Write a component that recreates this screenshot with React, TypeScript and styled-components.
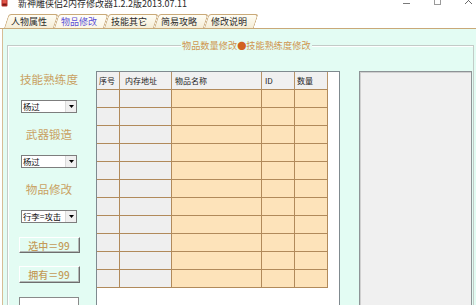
import React from "react";
import styled, { createGlobalStyle } from "styled-components";

const GlobalStyle = createGlobalStyle`
  html, body { margin: 0; padding: 0; background: #ffffff; }
  body {
    width: 476px; height: 305px; overflow: hidden;
    font-family: "Noto Sans CJK SC", "Noto Sans", sans-serif;
  }
  * { box-sizing: border-box; }
`;

const Window = styled.div`
  width: 476px;
  height: 305px;
  display: flex;
  flex-direction: column;
  overflow: hidden;
  background: #ffffff;
`;

const TitleBar = styled.div`
  height: 9px;
  flex: none;
  display: flex;
  align-items: flex-start;
  overflow: hidden;
  padding-left: 1px;
  background: #ffffff;
`;

const AppIcon = styled.svg`
  flex: none;
  margin-top: -1px;
`;

const TitleText = styled.span`
  margin-left: 10px;
  margin-top: -1px;
  font-size: 9px;
  line-height: 9px;
  color: #2a2a2a;
  white-space: nowrap;
`;

const Controls = styled.div`
  margin-left: auto;
  display: flex;
  gap: 24px;
  padding-right: 4px;
`;

const ControlGlyph = styled.svg<{ $top: number }>`
  flex: none;
  margin-top: ${(p) => p.$top}px;
`;

const TabStrip = styled.div`
  height: 20px;
  flex: none;
  display: flex;
  align-items: flex-end;
  padding-left: 4px;
  border-bottom: 1px solid #c9a978;
  background: #ffffff;
`;

const Tab = styled.div<{ $active?: boolean }>`
  position: relative;
  z-index: ${(p) => (p.$active ? 2 : 1)};
  width: 50px;
  height: 14px;
  display: flex;
  align-items: center;
  justify-content: center;
  font-size: 9px;
  line-height: 9px;
  white-space: nowrap;
  color: ${(p) => (p.$active ? "#5b4fd6" : "#2b2b2b")};

  &::before {
    content: "";
    position: absolute;
    inset: 0;
    z-index: -1;
    border: 1px solid #c9a978;
    border-bottom: none;
    border-radius: 3px 3px 0 0;
    background: ${(p) =>
      p.$active
        ? "linear-gradient(#fffef8, #fbf6e6)"
        : "linear-gradient(#fffdf4, #f5eed8)"};
    transform: skewX(-18deg);
    transform-origin: bottom left;
  }
`;

const Panel = styled.div`
  flex: 1;
  margin-left: 2px;
  border-left: 1px solid #d7bd95;
  background: #e3fcf3;
  padding: 16px 0 0 4px;
`;

const GroupBox = styled.div`
  position: relative;
  width: 467px;
  height: 300px;
  border: 1px solid #c3cbc7;
  box-shadow: inset 1px 1px 0 #ffffff;
  display: flex;
  align-items: flex-start;
  padding-top: 25px;
`;

const Caption = styled.div`
  position: absolute;
  top: -6px;
  left: 173px;
  padding: 0 1px;
  font-size: 9.2px;
  line-height: 10px;
  color: #cf9650;
  background: #e3fcf3;
  white-space: nowrap;
`;

const Dot = styled.span`
  color: #d2611f;
`;

const LeftCol = styled.div`
  width: 82px;
  flex: none;
  margin-right: 6px;
  display: flex;
  flex-direction: column;
  align-items: center;
`;

const Label = styled.div<{ $mt: number }>`
  margin-top: ${(p) => p.$mt}px;
  font-size: 11.6px;
  line-height: 14px;
  color: #c9a162;
  white-space: nowrap;
`;

const Select = styled.div`
  margin-top: 14px;
  width: 56px;
  height: 13px;
  display: flex;
  align-items: stretch;
  border: 1px solid #7d7d7d;
  background: #ffffff;
`;

const SelectText = styled.span`
  flex: 1;
  padding-left: 1px;
  font-size: 8.4px;
  line-height: 11px;
  color: #111;
  white-space: nowrap;
  overflow: hidden;
`;

const SelectArrow = styled.span`
  width: 11px;
  flex: none;
  display: flex;
  align-items: center;
  justify-content: center;
  background: #f0f0f0;
  border-left: 1px solid #dadada;
`;

const Button = styled.div<{ $mt: number; $h: number }>`
  margin-top: ${(p) => p.$mt}px;
  width: 61px;
  height: ${(p) => p.$h}px;
  display: flex;
  align-items: center;
  justify-content: center;
  font-size: 10px;
  font-weight: 500;
  color: #c49a58;
  white-space: nowrap;
  border: 1px solid;
  border-color: #ffffff #6e6e6e #6e6e6e #ffffff;
  box-shadow: inset -1px -1px 0 #b4bab7;
  background: #e3fcf3;
`;

const TextBox = styled.div`
  margin-top: 14px;
  width: 60px;
  height: 14px;
  background: #ffffff;
  border: 1px solid #8a8a8a;
`;

const ListView = styled.div`
  width: 244px;
  height: 240px;
  flex: none;
  border: 1px solid #7f8a8f;
  background: #ffffff;
`;

const Grid = styled.div`
  display: grid;
  grid-template-columns: 23px 52px 90px 33px 33px;
  grid-auto-rows: 18px;
  width: 231px;
`;

const HeadCell = styled.div<{ $pad: number }>`
  border-right: 1px solid #b89468;
  border-bottom: 1px solid #b18a5b;
  background: #f0f0f0;
  padding-left: ${(p) => p.$pad}px;
  font-size: 8px;
  line-height: 17px;
  color: #222;
  white-space: nowrap;
  overflow: hidden;
`;

const BodyCell = styled.div<{ $tone: "grey" | "orange" }>`
  border-right: 1px solid #b18a5b;
  border-bottom: 1px solid #b18a5b;
  background: ${(p) => (p.$tone === "grey" ? "#efefef" : "#fde3ba")};
`;

const SideList = styled.div`
  margin-left: 19px;
  width: 113px;
  height: 240px;
  flex: none;
  border: 1px solid #8d9396;
  box-shadow: inset 1px 1px 0 #d0d0d0;
  background: #f0f0f0;
`;

const tabs = ["人物属性", "物品修改", "技能其它", "简易攻略", "修改说明"];
const columns: { title: string; tone: "grey" | "orange"; pad: number }[] = [
  { title: "序号", tone: "grey", pad: 2 },
  { title: "内存地址", tone: "grey", pad: 5 },
  { title: "物品名称", tone: "orange", pad: 3 },
  { title: "ID", tone: "orange", pad: 3 },
  { title: "数量", tone: "orange", pad: 2 },
];
const ROWS = 11;

const Arrow = () => (
  <svg width="5" height="3" viewBox="0 0 5 3">
    <path d="M0 0 H5 L2.5 3 Z" fill="#000" />
  </svg>
);

export default function App() {
  return (
    <>
      <GlobalStyle />
      <Window>
        <TitleBar>
          <AppIcon width="7" height="8" viewBox="0 0 7 8">
            <rect x="0.5" y="0" width="6" height="7.5" rx="1" fill="#b8312a" />
            <rect x="1.5" y="1" width="4" height="3" fill="#e0564a" />
            <rect x="1.5" y="5" width="4" height="1.5" fill="#7a1b16" />
          </AppIcon>
          <TitleText>新神雕侠侣2内存修改器1.2.2版2013.07.11</TitleText>
          <Controls>
            <ControlGlyph $top={0} width="7" height="7" viewBox="0 0 7 7">
              <path d="M0 3.5 H7" stroke="#7a7a7a" strokeWidth="1" />
            </ControlGlyph>
            <ControlGlyph $top={-2} width="7" height="7" viewBox="0 0 7 7">
              <rect x="0.5" y="0.5" width="6" height="6" fill="none" stroke="#9a9a9a" strokeWidth="1" />
            </ControlGlyph>
            <ControlGlyph $top={-3} width="7" height="7" viewBox="0 0 7 7">
              <path d="M0 0 L7 7 M7 0 L0 7" stroke="#6a6a6a" strokeWidth="1" />
            </ControlGlyph>
          </Controls>
        </TitleBar>

        <TabStrip>
          {tabs.map((t, i) => (
            <Tab key={t} $active={i === 1}>
              {t}
            </Tab>
          ))}
        </TabStrip>

        <Panel>
          <GroupBox>
            <Caption>
              物品数量修改<Dot>●</Dot>技能熟练度修改
            </Caption>

            <LeftCol>
              <Label $mt={1}>技能熟练度</Label>
              <Select>
                <SelectText>杨过</SelectText>
                <SelectArrow>
                  <Arrow />
                </SelectArrow>
              </Select>
              <Label $mt={14}>武器锻造</Label>
              <Select>
                <SelectText>杨过</SelectText>
                <SelectArrow>
                  <Arrow />
                </SelectArrow>
              </Select>
              <Label $mt={14}>物品修改</Label>
              <Select>
                <SelectText>行李=攻击</SelectText>
                <SelectArrow>
                  <Arrow />
                </SelectArrow>
              </Select>
              <Button $mt={14} $h={16}>选中＝99</Button>
              <Button $mt={13} $h={17}>拥有＝99</Button>
              <TextBox />
            </LeftCol>

            <ListView>
              <Grid>
                {columns.map((c) => (
                  <HeadCell key={c.title} $pad={c.pad}>
                    {c.title}
                  </HeadCell>
                ))}
                {Array.from({ length: ROWS }).map((_, r) =>
                  columns.map((c) => <BodyCell key={`${r}-${c.title}`} $tone={c.tone} />)
                )}
              </Grid>
            </ListView>

            <SideList />
          </GroupBox>
        </Panel>
      </Window>
    </>
  );
}
